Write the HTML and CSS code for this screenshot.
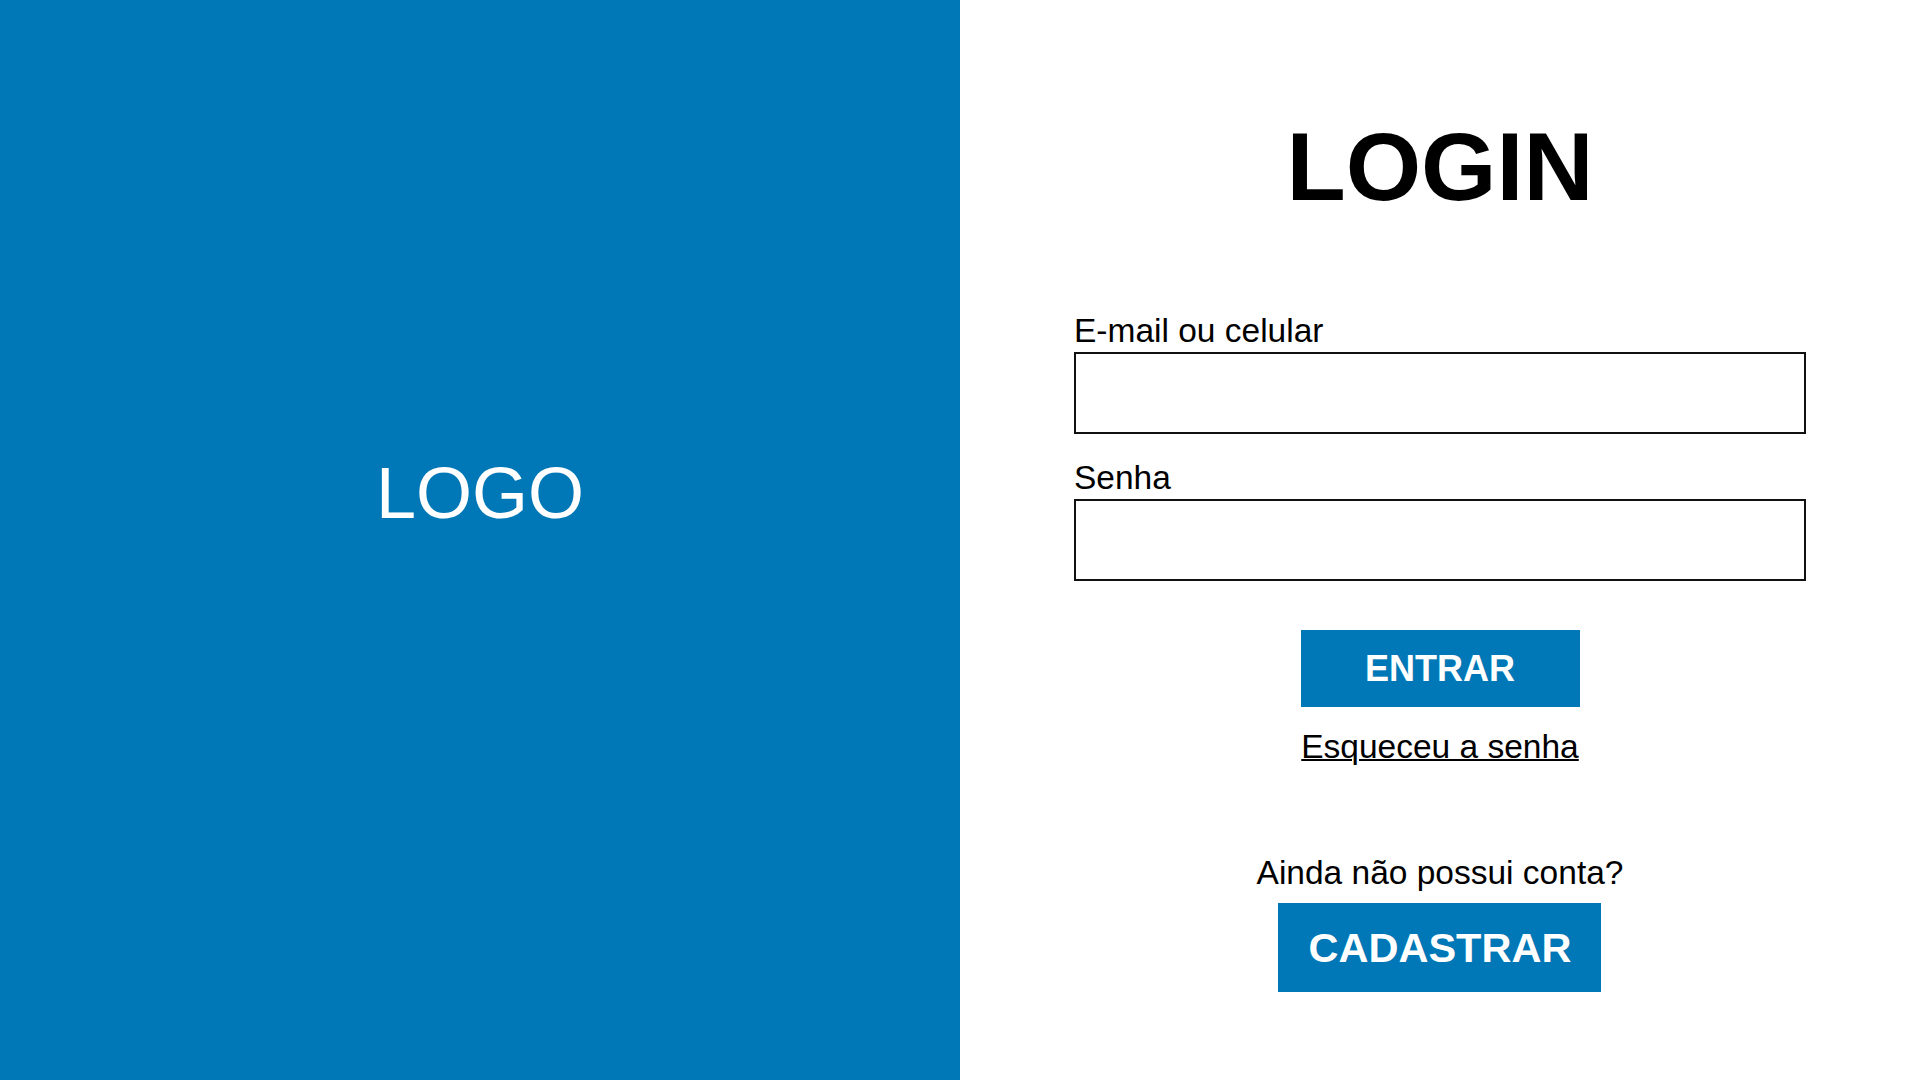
FILE: index.html
```html
<!DOCTYPE html>
<html lang="pt-BR">
<head>
    <meta charset="UTF-8">
    <title>Login</title>
    <link rel="stylesheet" href="styles.css">
</head>
<body>
    <div class="page">
        <!-- Brand side -->
        <div class="brand">
            <span class="logo">LOGO</span>
        </div>

        <!-- Login form -->
        <div class="login">
            <h1>LOGIN</h1>
            <form class="login-form" onsubmit="return false">
                <div class="form-group">
                    <label for="user">E-mail ou celular</label>
                    <input type="text" id="user">
                </div>
                <div class="form-group">
                    <label for="password">Senha</label>
                    <input type="password" id="password">
                </div>
                <button type="submit" class="btn btn-enter">ENTRAR</button>
                <a href="#" class="forgot">Esqueceu a senha</a>
            </form>

            <div class="signup">
                <p>Ainda não possui conta?</p>
                <button class="btn btn-signup">CADASTRAR</button>
            </div>
        </div>
    </div>
</body>
</html>
```

FILE: styles.css
```css
body { margin: 0; font-family: "Liberation Sans", Arial, sans-serif; color: #000; }
.page { display: flex; height: 1080px; }

.brand { width: 960px; background-color: #0077b6; display: flex; align-items: center; justify-content: center; padding-bottom: 94px; box-sizing: border-box; }
.logo { color: #fff; font-size: 72px; line-height: 80px; }

.login { width: 960px; display: flex; flex-direction: column; align-items: center; padding-top: 119px; box-sizing: border-box; }
.login h1 { margin: 0; font-size: 97px; line-height: 96px; font-weight: bold; }

.login-form { width: 732px; margin-top: 97px; display: flex; flex-direction: column; align-items: center; }
.form-group { width: 100%; }
.form-group + .form-group { margin-top: 25px; }
label { display: block; font-size: 33.5px; line-height: 38px; margin-bottom: 2px; }
input { display: block; width: 100%; height: 82px; box-sizing: border-box; border: 2px solid #111; border-radius: 0; padding: 0 12px; font-size: 30px; font-family: inherit; outline: none; }

.btn { border: none; background-color: #0077b6; color: #fff; font-family: inherit; font-weight: bold; cursor: pointer; padding: 0; }
.btn:hover { background-color: #00669c; }
.btn-enter { width: 279px; height: 77px; margin-top: 49px; font-size: 36px; }

.forgot { margin-top: 21px; font-size: 33.5px; line-height: 38px; color: #000; text-decoration: underline; text-decoration-thickness: 2px; }

.signup { margin-top: 88px; display: flex; flex-direction: column; align-items: center; }
.signup p { margin: 0; font-size: 33.5px; line-height: 38px; }
.btn-signup { width: 323px; height: 89px; margin-top: 11px; font-size: 41.5px; }
```
